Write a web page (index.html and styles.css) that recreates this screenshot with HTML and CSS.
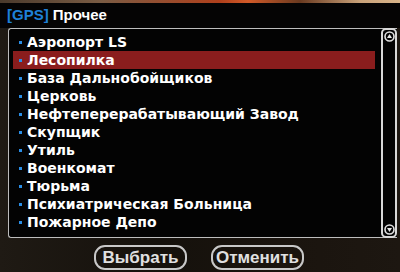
FILE: index.html
```html
<!DOCTYPE html>
<html>
<head>
<meta charset="utf-8">
<link rel="stylesheet" href="styles.css">
</head>
<body>
<div class="screen">
  <div class="topstrip"></div>
  <div class="titlebar"><span class="tag">[GPS]</span> Прочее</div>
  <div class="listbox">
    <ul class="items">
      <li class="item">Аэропорт LS</li>
      <li class="item selected">Лесопилка</li>
      <li class="item">База Дальнобойщиков</li>
      <li class="item">Церковь</li>
      <li class="item">Нефтеперерабатывающий Завод</li>
      <li class="item">Скупщик</li>
      <li class="item">Утиль</li>
      <li class="item">Военкомат</li>
      <li class="item">Тюрьма</li>
      <li class="item">Психиатрическая Больница</li>
      <li class="item">Пожарное Депо</li>
    </ul>
    <div class="scrollbar">
      <svg class="arrow" width="11" height="11" viewBox="0 0 11 11"><circle cx="5.5" cy="5.5" r="4.5" fill="none" stroke="#e0e0e0" stroke-width="1.6"/><path d="M5.5 3 L8 7 L3 7 Z" fill="#e8e8e8"/></svg>
      <svg class="arrow" width="11" height="11" viewBox="0 0 11 11"><circle cx="5.5" cy="5.5" r="4.5" fill="none" stroke="#e0e0e0" stroke-width="1.6"/><path d="M3 4 L8 4 L5.5 8 Z" fill="#e8e8e8"/></svg>
    </div>
  </div>
  <div class="buttons">
    <div class="btn">Выбрать</div>
    <div class="btn">Отменить</div>
  </div>
</div>
</body>
</html>
```
FILE: styles.css
```css
html, body {
  margin: 0;
  padding: 0;
  width: 400px;
  height: 272px;
  overflow: hidden;
  background: #17120d;
}
.screen {
  width: 400px;
  height: 272px;
  display: flex;
  flex-direction: column;
  font-family: "DejaVu Sans", sans-serif;
  font-weight: bold;
  background: linear-gradient(90deg, #1f1a14 0%, #15110c 40%, #1a140e 70%, #1d1711 100%);
}
.topstrip {
  height: 3px;
  background: linear-gradient(90deg, #4a3a2c 0%, #7a5c44 25%, #b0401c 55%, #d25a28 62%, #6a3a20 75%, #c9a27a 90%, #d8b48a 100%);
}
.titlebar {
  height: 25px;
  background: #050404;
  color: #ffffff;
  font-family: "Liberation Sans", Arial, sans-serif;
  font-size: 15px;
  line-height: 24px;
  padding-left: 7px;
  box-sizing: border-box;
}
.tag {
  color: #1e80d8;
}
.listbox {
  margin-left: 8px;
  margin-right: 3px;
  height: 208px;
  display: flex;
  background: #030303;
  border: 1px solid #bdbdbd;
  border-right: none;
  border-radius: 3px 0 0 3px;
}
.items {
  flex: 1;
  list-style: none;
  margin: 0;
  padding: 4px 6px 0 4px;
}
.item {
  height: 18px;
  line-height: 18px;
  color: #ffffff;
  font-size: 14px;
  padding-left: 14px;
  position: relative;
}
.item::before {
  content: "";
  position: absolute;
  left: 6px;
  top: 8px;
  width: 3px;
  height: 3px;
  background: #2a8ee6;
}
.selected {
  background: #8a1d1d;
}
.scrollbar {
  width: 12px;
  margin-top: -1px;
  margin-bottom: -1px;
  border: 2px solid #d8d8d8;
  border-radius: 5px;
  display: flex;
  flex-direction: column;
  justify-content: space-between;
  align-items: center;
  padding: 1px 0;
  background: #030303;
}
.arrow {
  display: block;
}
.buttons {
  display: flex;
  justify-content: center;
  gap: 24px;
  padding-top: 7px;
  padding-right: 2px;
}
.btn {
  width: 93px;
  height: 25px;
  box-sizing: border-box;
  border: 2px solid #c8c8c8;
  border-radius: 11px;
  color: #e0e0e0;
  font-family: "Liberation Sans", Arial, sans-serif;
  font-size: 17px;
  line-height: 21px;
  text-align: center;
}
```
